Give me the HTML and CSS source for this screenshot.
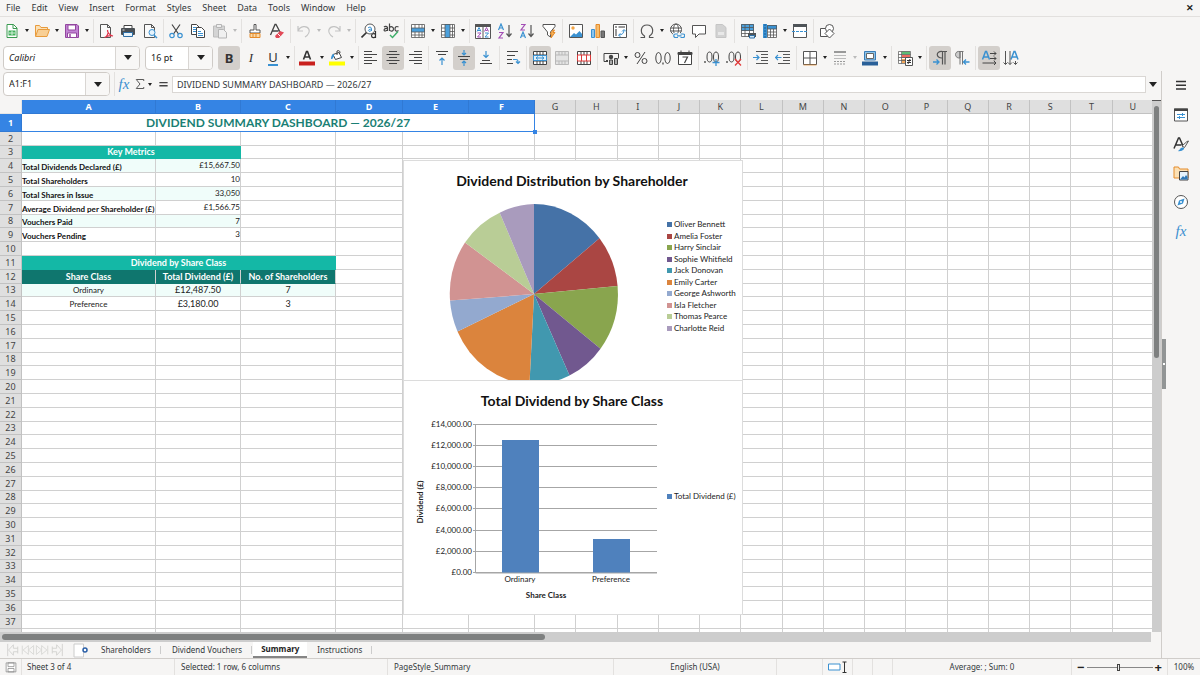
FILE: index.html
```html
<!DOCTYPE html>
<html lang="en">
<head>
<meta charset="utf-8">
<title>Dividend Summary</title>
<link rel="stylesheet" href="styles.css">
</head>
<body>
<svg class="sprite" aria-hidden="true">
  <symbol id="new" viewBox="0 0 16 16"><path d="M3 1.5h6.500l3.500 3.500v9.500H3z" fill="#fff" stroke="#3a9a50"/><path d="M9 1.500V5.500h4" fill="none" stroke="#3a9a50"/><path d="M4.500 7.500h7v5h-7z" fill="#43b05c"/><path d="M5 10h6M8 8v4" stroke="#d6f2dc"/></symbol>
  <symbol id="open" viewBox="0 0 16 16"><path d="M1.500 13V2.500h4l1.500 2h6.500V7" fill="#fbe0b5" stroke="#e89b3c"/><path d="M1.500 13.500 4 6.500h11.500l-2.500 7z" fill="#f8cf95" stroke="#e89b3c"/></symbol>
  <symbol id="save" viewBox="0 0 16 16"><path d="M1.500 1.500h11.500l1.500 1.500v11.500h-13z" fill="#c183d3" stroke="#93469f"/><path d="M4 2h7.500v5H4zM3.500 10h9v4.500h-9z" fill="#fff" stroke="#93469f"/><path d="M6 11v3.500" stroke="#93469f" stroke-width="1.500"/></symbol>
  <symbol id="pdf" viewBox="0 0 16 16"><path d="M2.500 1.500h7l3 3v10h-10z" fill="#fafafa" stroke="#555"/><path d="M9.500 1.500v3h3" fill="none" stroke="#555"/><path d="M9.500 7c1.500 4-1 7-3 7.500M9.500 7c-.5 3 3 5.500 5.500 6-3-.8-6 0-8.500 1.500" fill="none" stroke="#e0354b" stroke-width="1.200"/></symbol>
  <symbol id="print" viewBox="0 0 16 16"><path d="M4 5V2.500h8V5" fill="#fff" stroke="#444"/><rect x="1" y="5" width="14" height="7" rx="1" fill="#4a4f54"/><path d="M3.500 9.500h9v4h-9z" fill="#e8f3fb" stroke="#2e6fa6"/><path d="M2.500 7h2" stroke="#ddd"/></symbol>
  <symbol id="preview" viewBox="0 0 16 16"><path d="M2.500 1.500h7l3 3v10h-10z" fill="#fafafa" stroke="#555"/><path d="M9.500 1.500v3h3" fill="none" stroke="#555"/><circle cx="10" cy="9.500" r="3" fill="#e6f3fc" stroke="#3a91d1"/><path d="m12 12 3 3" stroke="#3a91d1" stroke-width="1.500"/></symbol>
  <symbol id="cut" viewBox="0 0 16 16"><path d="m4 1.500 6.500 9.500M12 1.500 5.500 11" stroke="#444" stroke-width="1.200"/><circle cx="4" cy="12.500" r="2.200" fill="none" stroke="#3a91d1" stroke-width="1.200"/><circle cx="12" cy="12.500" r="2.200" fill="none" stroke="#3a91d1" stroke-width="1.200"/></symbol>
  <symbol id="copy" viewBox="0 0 16 16"><path d="M1.500 1.500h5l2.500 2.500v7.500H1.500z" fill="#fff" stroke="#444"/><path d="M3 4.500h3M3 6.500h3M3 8.500h3" stroke="#3a91d1"/><path d="M6.500 4.500h5l3 3v7h-8z" fill="#fff" stroke="#444"/><path d="M8 8.500h3M8 10.500h5M8 12.500h5" stroke="#3a91d1"/></symbol>
  <symbol id="paste" viewBox="0 0 16 16"><path d="M1.500 3h11v11h-11z" fill="#d4d4d4" stroke="#bcbcbc"/><path d="M4.500 1.500h5v3h-5z" fill="#eee" stroke="#b5b5b5"/><path d="M6.500 6.500h5l3 3v5.500h-8z" fill="#f0f0f0" stroke="#b5b5b5"/></symbol>
  <symbol id="clone" viewBox="0 0 16 16"><path d="M7 1.500h2V7h4v3H3V7h4z" fill="#fff" stroke="#555"/><path d="M3 10.500h10v4H3z" fill="#fad9a8" stroke="#e58b2a"/><path d="M6 11v3M9 11v3" stroke="#e58b2a"/></symbol>
  <symbol id="clear" viewBox="0 0 16 16"><path d="M1.500 12 6 1.500h1L11 9M3.500 8h6" fill="none" stroke="#444" stroke-width="1.300"/><path d="m6 13 5-5 4 1.500-5 5.500H7z" fill="#e24a58"/><path d="m8.500 10.500 3 3" stroke="#fff"/></symbol>
  <symbol id="undo" viewBox="0 0 16 16"><path d="M2 3v5h5M2 8c2-5 9-6 11-1.500 1 3-1 5.500-4 7.500" fill="none" stroke="#c3c3c3" stroke-width="1.200"/></symbol>
  <symbol id="redo" viewBox="0 0 16 16"><path d="M14 3v5H9M14 8C12 3 5 2 3 6.500c-1 3 1 5.500 4 7.500" fill="none" stroke="#c3c3c3" stroke-width="1.200"/></symbol>
  <symbol id="find" viewBox="0 0 16 16"><circle cx="9" cy="6" r="5" fill="#fff" stroke="#555"/><path d="m5.500 9.500-5 5" stroke="#333" stroke-width="1.700"/><path d="M7 5c1-1.500 3.500-1 3.500.5V8M10.500 6C7 6 6.500 8.500 9 8.300l1.500-1" fill="none" stroke="#3a91d1"/><path d="M14.500 8v7M14.500 11.500c-1-1.500-4-1-4 1.200s3 2.500 4 1" fill="none" stroke="#333" stroke-width="1.200"/></symbol>
  <symbol id="spell" viewBox="0 0 16 16"><path d="M1 4c1-1 3.500-.8 3.500.8V8M4.500 5.500C1 5 0 8 2.500 8l2-1M6.500.5V8M6.500 4.500c1.500-1.500 4-.7 4 1.500s-2.500 3-4 1M15.500 4c-2-1.200-3.500 0-3.500 2s1.500 2.800 3.500 1.500" fill="none" stroke="#444" stroke-width="1.200"/><path d="m7 12 2.500 2.500L15 8.500" fill="none" stroke="#3cae68" stroke-width="1.400"/></symbol>
  <symbol id="row" viewBox="0 0 16 16"><path d="M1.500 1.500h13v13h-13z" fill="#fff"/><path d="M1 5h14v4H1z" fill="#4ba0dc"/><path d="M1.500 1.500h13v13h-13zM1.500 5h13M1.500 9h13M1.500 12h13M5 1.500V5M9 1.500V5M12 1.500V5M5 9v5.500M9 9v5.500M12 9v5.500" fill="none" stroke="#555" stroke-width=".8"/></symbol>
  <symbol id="col" viewBox="0 0 16 16"><path d="M1.500 1.500h13v13h-13z" fill="#fff"/><path d="M5 1h5v14H5z" fill="#4ba0dc"/><path d="M1.500 1.500h13v13h-13zM5 1.500v13M10 1.500v13M12.500 1.500v13M1.500 5H5M1.500 8.500H5M1.500 12H5M10 5h4.500M10 8.500h4.500M10 12h4.500" fill="none" stroke="#555" stroke-width=".8"/></symbol>
  <symbol id="sort" viewBox="0 0 16 16"><path d="M.5 1.500h15v14H.5z" fill="#fff" stroke="#555"/><path d="M.5 1.500h15v2H.5zM8 3v12" fill="#555" stroke="#555"/><path d="m2 8.500 2-4 2 4M3 7.500h2M10 10h3.500L10 14h3.500" fill="none" stroke="#3a91d1"/><path d="M2.500 10H6l-3.500 4H6m3.500-5.500 2-4 2 4M10.500 7.500h2" fill="none" stroke="#a34fb5"/></symbol>
  <symbol id="asc" viewBox="0 0 16 16"><path d="m1.500 7 2.500-6 2.500 6M2.500 5h3" fill="none" stroke="#3a91d1" stroke-width="1.200"/><path d="M2 9.500h4L2 15h4" fill="none" stroke="#a34fb5" stroke-width="1.200"/><path d="M12 2v11M9.500 10.500 12 13.500l2.500-3" fill="none" stroke="#555" stroke-width="1.200"/></symbol>
  <symbol id="desc" viewBox="0 0 16 16"><path d="m1.500 15 2.500-6 2.500 6M2.500 13h3" fill="none" stroke="#3a91d1" stroke-width="1.200"/><path d="M2 1.500h4L2 7h4" fill="none" stroke="#a34fb5" stroke-width="1.200"/><path d="M12 2v11M9.500 10.500 12 13.500l2.500-3" fill="none" stroke="#555" stroke-width="1.200"/></symbol>
  <symbol id="filter" viewBox="0 0 16 16"><path d="M2 1.500h12v2L9.500 9v5l-3-2V9L2 3.500z" fill="#fff" stroke="#555"/><path d="m12 7-3 4h2l-1 4 4-5.500h-2L13.500 7z" fill="#f5b55f" stroke="#e58b2a"/></symbol>
  <symbol id="image" viewBox="0 0 16 16"><path d="M1.500 1.500h13v13h-13z" fill="#fff" stroke="#555"/><path d="m2 14 4-4 2 1.500L11.500 8 14 11v3z" fill="#3a91d1"/><circle cx="5" cy="5" r="1.700" fill="#f2a444"/></symbol>
  <symbol id="chart" viewBox="0 0 16 16"><path d="M1.500 6.500h3v8h-3z" fill="#8cc4ec" stroke="#3a91d1"/><path d="M6 1.500h3.500v13H6z" fill="#f7bd6c" stroke="#e58b2a"/><path d="M11 8h3.500v6.500H11z" fill="#777" stroke="#555"/></symbol>
  <symbol id="pivot" viewBox="0 0 16 16"><path d="M1.500 1.500h13v13h-13z" fill="#fff" stroke="#555"/><path d="M3 4h2M6.500 4H13M4 6v7" stroke="#777" stroke-width="1.500"/><path d="M7 12c3 0 5-2 5-5M10 8.500 12 6.500l2 2M8.500 10.500 6.500 12l2 2" fill="none" stroke="#3a91d1"/></symbol>
  <symbol id="omega" viewBox="0 0 16 16"><path d="M1.500 14.500h4V13C.5 10 1.500 2 8 2s7.500 8 2.500 11v1.500h4" fill="none" stroke="#555" stroke-width="1.200"/></symbol>
  <symbol id="link" viewBox="0 0 16 16"><circle cx="7" cy="6.500" r="5.500" fill="#fff" stroke="#555"/><ellipse cx="7" cy="6.500" rx="2.500" ry="5.500" fill="none" stroke="#555"/><path d="M1.500 5h11M1.500 8h11" stroke="#555"/><path d="M4 10h12v6H4z" fill="#f5f5f4"/><path d="M9 14.500H6.500a1.700 1.700 0 0 1 0-3.500H9M11.500 11H14a1.700 1.700 0 0 1 0 3.500h-2.500M8 12.800h4.500" fill="none" stroke="#3a91d1" stroke-width="1.200"/></symbol>
  <symbol id="comment" viewBox="0 0 16 16"><path d="M1.500 2.500h13v8.500H8l-3.500 3.500V11h-3z" fill="#fff" stroke="#555"/></symbol>
  <symbol id="header" viewBox="0 0 16 16"><path d="M3 1.500h6.500l3.500 3v10H3z" fill="#d2d2d2" stroke="#c5c5c5"/><path d="M5 9h6v3H5z" fill="#e8e8e8"/></symbol>
  <symbol id="printarea" viewBox="0 0 16 16"><path d="M1.500 1.500h12v12h-12z" fill="#fff"/><path d="M1 1h13v7H1z" fill="#4ba0dc"/><path d="M1.500 1.500h12v12h-12zM1.500 4.500h12M1.500 7.500h12M1.500 10.500h12M5 1.500v12M9.500 1.500v12" fill="none" stroke="#555" stroke-width=".8"/><path d="M8 10h8v4H8z" fill="#4f5458"/><path d="M9.500 12.500h5V15h-5z" fill="#cfe7f8" stroke="#2e6fa6"/></symbol>
  <symbol id="freeze" viewBox="0 0 16 16"><path d="M1.500 2.500h13v12h-13z" fill="#fff"/><path d="M1 1h4v14H1zM1 2h14v4H1z" fill="#3a91d1"/><path d="M5.500 2.500h9v12h-9zM5.500 6h9M5.500 9h9M5.500 12h9M8.500 6v8.500M11.500 6v8.500" fill="none" stroke="#555" stroke-width=".8"/><path d="M3 1v14" stroke="#195f9c" stroke-dasharray="2 1"/></symbol>
  <symbol id="split" viewBox="0 0 16 16"><path d="M1.500 1.500h13v13h-13z" fill="#fff" stroke="#555"/><path d="M1 1h14v3H1z" fill="#4f5458"/><path d="M0 8.500h16" stroke="#3a91d1" stroke-dasharray="3 1"/></symbol>
  <symbol id="shapes" viewBox="0 0 16 16"><path d="M1.500 5.500h7v8h-7z" fill="#fff" stroke="#555"/><circle cx="10.500" cy="5.500" r="4" fill="#fff" stroke="#555"/><path d="m10.500 6 4.500 4.500-4.500 4.500L6 10.500z" fill="#fff" stroke="#555"/></symbol>
  <symbol id="fontcolor" viewBox="0 0 16 16"><path d="m4.500 9.500 3-8h1l3 8M5.500 7h5" fill="none" stroke="#333" stroke-width="1.600"/><path d="M0 11.500h16v4H0z" fill="#c9211e"/></symbol>
  <symbol id="highlight" viewBox="0 0 16 16"><path d="m4 4.500 6-2 2.500 5-6 2z" fill="#fff" stroke="#444"/><path d="M8 5V1c2-1 3 0 3 2" fill="none" stroke="#444"/><path d="M2 9c0-3 1-5 3-5v3c-1 0-1.500 1-1.500 2z" fill="#3a91d1"/><path d="M0 11.500h16v4H0z" fill="#ff0"/></symbol>
  <symbol id="left" viewBox="0 0 16 16"><path d="M1 1.500h8M1 4.500h13M1 7.500h8M1 10.500h13M1 13.500h8" stroke="#444"/></symbol>
  <symbol id="center" viewBox="0 0 16 16"><path d="M4 1.500h8M1.500 4.500h13M4 7.500h8M1.500 10.500h13M4 13.500h8" stroke="#444"/></symbol>
  <symbol id="right" viewBox="0 0 16 16"><path d="M7 1.500h8M2 4.500h13M7 7.500h8M2 10.500h13M7 13.500h8" stroke="#444"/></symbol>
  <symbol id="top" viewBox="0 0 16 16"><path d="M2 1.500h12M4 4.500h8" stroke="#444"/><path d="M8 15V8M5.500 10.500 8 8l2.500 2.500" fill="none" stroke="#3a91d1" stroke-width="1.200"/></symbol>
  <symbol id="middle" viewBox="0 0 16 16"><path d="M2 6.500h12M4 9.500h8" stroke="#444"/><path d="M8 0v5M6 3l2 2 2-2M8 16v-5M6 13l2-2 2 2" fill="none" stroke="#3a91d1" stroke-width="1.200"/></symbol>
  <symbol id="bottom" viewBox="0 0 16 16"><path d="M2 13.500h12M4 10.500h8" stroke="#444"/><path d="M8 1v6.500M5.500 5 8 7.500 10.500 5" fill="none" stroke="#3a91d1" stroke-width="1.200"/></symbol>
  <symbol id="wrap" viewBox="0 0 16 16"><path d="M2 1.500h11M2 5.500h8M2 9.500h5M2 13.500h6" stroke="#444"/><path d="M8 9.500h3c2 0 2 1 2 4M11 11.500l2 2 2-2" fill="none" stroke="#3a91d1" stroke-width="1.200"/></symbol>
  <symbol id="merge" viewBox="0 0 16 16"><path d="M1.500 1.500h13v13h-13z" fill="#fff"/><path d="M1.500 1.500h13v13h-13zM1.500 5h13M1.500 11h13M5 1.500V5M11 1.500V5M5 11v3.500M8 11v3.500M11 11v3.500M8 1.500V5" fill="none" stroke="#444"/><path d="M1.500 5.500h13v5h-13zM4 8h8M6 6.500 4 8l2 1.500M10 6.500 12 8l-2 1.500" fill="#dff0fb" stroke="#3a91d1"/></symbol>
  <symbol id="mergegrey" viewBox="0 0 16 16"><path d="M1.500 1.500h13v13h-13zM1.500 5h13M1.500 11h13M5 1.500V5M11 1.500V5M5 11v3.500M11 11v3.500M8 1.500V5M8 11v3.500" fill="#e4e4e4" stroke="#b9b9b9"/></symbol>
  <symbol id="unmerge" viewBox="0 0 16 16"><path d="M1.500 1.500h13v13h-13zM5 1.500V5M8 1.500V5M11 1.500V5M5 11v3.500M8 11v3.500M11 11v3.500" fill="#fff" stroke="#444"/><path d="M1.500 5h13v6h-13zM5.500 5v6M10.500 5v6" fill="#fff" stroke="#dc3a3a"/></symbol>
  <symbol id="currency" viewBox="0 0 16 16"><path d="M1 3.500h14.500v5M1 3.500v8h4" fill="none" stroke="#444"/><circle cx="8" cy="7" r="2.200" fill="#444"/><path d="M3 10.500h2M6.500 10v4.500h3V10zM11.500 8.500h3v6h-3z" fill="#aaa" stroke="#444"/></symbol>
  <symbol id="percent" viewBox="0 0 16 16"><circle cx="4.500" cy="5" r="2.500" fill="none" stroke="#444"/><circle cx="11.500" cy="11" r="2.500" fill="none" stroke="#444"/><path d="M12 2 4 14" stroke="#444"/></symbol>
  <symbol id="number" viewBox="0 0 16 16"><ellipse cx="3.500" cy="8" rx="2.700" ry="5.500" fill="none" stroke="#444"/><ellipse cx="12.500" cy="8" rx="2.700" ry="5.500" fill="none" stroke="#444"/><path d="M8 12.500v2" stroke="#444" stroke-width="1.300"/></symbol>
  <symbol id="date" viewBox="0 0 16 16"><path d="M1.500 2.500h13v12h-13z" fill="#fff" stroke="#444"/><path d="M1 2.500h14v2H1zM4 .5v3M12 .5v3" fill="#444" stroke="#444"/><path d="M5.500 7h5L7.500 13" fill="none" stroke="#444" stroke-width="1.200"/></symbol>
  <symbol id="adddec" viewBox="0 0 16 16"><ellipse cx="5.500" cy="7" rx="2.500" ry="5" fill="none" stroke="#444"/><ellipse cx="12" cy="7" rx="2.500" ry="5" fill="none" stroke="#444"/><path d="M1 11v2" stroke="#444" stroke-width="1.300"/><path d="M12 9v7M8.500 12.500h7" stroke="#3a91d1" stroke-width="1.300"/></symbol>
  <symbol id="deldec" viewBox="0 0 16 16"><ellipse cx="5.500" cy="7" rx="2.500" ry="5" fill="none" stroke="#444"/><ellipse cx="12" cy="7" rx="2.500" ry="5" fill="none" stroke="#444"/><path d="M1 11v2" stroke="#444" stroke-width="1.300"/><path d="m9 9 6 6.500M15 9l-6 6.500" stroke="#e23b3b" stroke-width="1.300"/></symbol>
  <symbol id="indent" viewBox="0 0 16 16"><path d="M3 1.500h12M8 4.500h7M8 7.500h7M8 10.500h7M3 13.500h12" stroke="#555"/><path d="M0 7.500h6M3.500 5 6 7.500 3.500 10" fill="none" stroke="#3a91d1" stroke-width="1.200"/></symbol>
  <symbol id="outdent" viewBox="0 0 16 16"><path d="M3 1.500h12M8 4.500h7M8 7.500h7M8 10.500h7M3 13.500h12" stroke="#555"/><path d="M6.500 7.500H0M3 5 .5 7.500 3 10" fill="none" stroke="#3a91d1" stroke-width="1.200"/></symbol>
  <symbol id="borders" viewBox="0 0 16 16"><path d="M1.500 1.500h13v13h-13zM8 1.500v13M1.500 8h13" fill="#fff" stroke="#555"/><path d="M1.500 15h13" stroke="#e58b2a" stroke-width=".7"/></symbol>
  <symbol id="borderstyle" viewBox="0 0 16 16"><path d="M2 2h12" stroke="#999" stroke-width="2"/><path d="M2 5.500h12M2 8.500h12" stroke="#bbb"/><path d="M2 11.500h12M2 14h12" stroke="#999" stroke-dasharray="2 1"/></symbol>
  <symbol id="bordercolor" viewBox="0 0 16 16"><path d="M2.500 1.500h11v8.500h-11z" fill="#8ec5ea" stroke="#3a7db8"/><path d="M4.500 3.500h7v5h-7z" fill="#fff" stroke="#666"/><path d="M0 11.500h16v4H0z" fill="#2a6099"/></symbol>
  <symbol id="cond" viewBox="0 0 16 16"><path d="M1.500 1.500h12v12h-12z" fill="#fff"/><path d="M5 1.500h8v3H5z" fill="#5dbb74"/><path d="M5 5h8v3H5z" fill="#ee6a5f"/><path d="M5 9h5v4H5z" fill="#f3a75a"/><path d="M1.500 1.500h12v12h-12zM1.500 4.500h12M1.500 7.500h12M1.500 10.500h12M4.500 1.500v12" fill="none" stroke="#555" stroke-width=".7"/><path d="M8.500 7.500h7v8h-7z" fill="#fff" stroke="#555"/><path d="M10 10.500h4M10 12.500h4M13 9l-2 5" stroke="#333"/></symbol>
  <symbol id="ltr" viewBox="0 0 16 16"><path d="M8.500 1.500H15M10.500 1.500v13M13 1.500v13M10.500 1.500c-7-1-7 7 0 6.500" fill="none" stroke="#555" stroke-width="1.200"/><path d="M1 12h6M4.500 9.500 7 12l-2.500 2.500" fill="none" stroke="#3a91d1" stroke-width="1.300"/></symbol>
  <symbol id="rtl" viewBox="0 0 16 16"><path d="M5 1.500h4.500M6 1.500v13M8.500 1.500v13M6 1.500C0 .5 0 8.500 6 8z" fill="#ccc" stroke="#777"/><path d="M15.500 12H10M12 9.500 9.500 12l2.500 2.500" fill="none" stroke="#3a91d1" stroke-width="1.300"/></symbol>
  <symbol id="texth" viewBox="0 0 16 16"><path d="M1.500 9.500 4.500 1.500h1l3 8M2.500 7h5" fill="none" stroke="#3a91d1" stroke-width="1.500"/><path d="M9 3.500h6M9 8.500h6M1.500 13h13.500M13 1.500l2 2-2 2M13 6.500l2 2-2 2M13 11l2 2-2 2" fill="none" stroke="#444"/></symbol>
  <symbol id="textv" viewBox="0 0 16 16"><path d="m8 9.500 3-8h1l3 8M9 7h5" fill="none" stroke="#3a91d1" stroke-width="1.500"/><path d="M2.500 1v13.500M7 1v13.500M12.500 11v3.500M.5 12.500l2 2 2-2M5 12.500l2 2 2-2M10.500 12.500l2 2 2-2" fill="none" stroke="#555"/></symbol>
  <symbol id="burger" viewBox="0 0 16 16"><path d="M3 4.500h10M3 8.200h10M3 12h10" stroke="#333" stroke-width="1.400"/></symbol>
  <symbol id="props" viewBox="0 0 16 16"><path d="M1.500 2h13v12h-13z" fill="#fff" stroke="#555"/><path d="M1 1.500h14v2.500H1z" fill="#444"/><path d="M4 7.500h8M4 10.500h8" stroke="#3a91d1"/><path d="M9.500 6v3M6.500 9v3" stroke="#3a91d1"/></symbol>
  <symbol id="styles" viewBox="0 0 16 16"><path d="M1 12.500 5.500 2h1l4 9M2.500 9h6" fill="none" stroke="#333" stroke-width="1.500"/><path d="m15.500 5-4 6.500L9 10l5-4.500z" fill="#fff" stroke="#555"/><path d="M4 15c3 0 3-4 6-3.500S10 16 4 15z" fill="#3a91d1"/></symbol>
  <symbol id="gallery" viewBox="0 0 16 16"><path d="M1 13V2h4.500l1 2H15v9z" fill="#fbe0b5" stroke="#e58b2a"/><path d="M6.500 6.500h8.500v8.500H6.500z" fill="#e6f3fc" stroke="#444"/><path d="m7 14.500 3-3.500 1.500 1.500L13 10l1.500 2v2.500z" fill="#2f78b7"/></symbol>
  <symbol id="compass" viewBox="0 0 16 16"><circle cx="8" cy="8" r="6.500" fill="#fff" stroke="#555"/><path d="M11.500 4.500 10 9.500l-5.500 2L6 6.500z" fill="#3a91d1"/><circle cx="8" cy="8" r="1" fill="#fff"/></symbol>
  <symbol id="sigma" viewBox="0 0 16 16"><path d="M13 4V2H3l5 6-5 6h10v-2" fill="none" stroke="#555" stroke-width="1.300"/></symbol>
  <symbol id="equals" viewBox="0 0 16 16"><path d="M2 6h12M2 10.500h12" stroke="#444" stroke-width="2"/></symbol>
  <symbol id="disk" viewBox="0 0 16 16"><path d="M1.500 2.500h13v12h-13zM4 2.500h8v5H4zM4 10h8v4.500H4z" fill="#fff" stroke="#888"/></symbol>
  <symbol id="first" viewBox="0 0 16 16"><path d="M2.500 1v14M14 4v8M14 6H9V2L3.500 8 9 14v-4h5" fill="none" stroke="#d0d0ce"/></symbol>
  <symbol id="prev" viewBox="0 0 16 16"><path d="M2 3v10M9 3 3 8l6 5zM15 3 9 8l6 5z" fill="none" stroke="#d6d6d4"/></symbol>
  <symbol id="next" viewBox="0 0 16 16"><path d="M14 3v10M7 3l6 5-6 5zM1 3l6 5-6 5z" fill="none" stroke="#d6d6d4"/></symbol>
  <symbol id="last" viewBox="0 0 16 16"><path d="M13.500 1v14M2 4v8M2 6h5V2l5.500 6L7 14v-4H2" fill="none" stroke="#d0d0ce"/></symbol>
  <symbol id="addsheet" viewBox="0 0 16 16"><path d="M1 2h9.500v13H1z" fill="#fff" stroke="#ccc"/><circle cx="12" cy="8" r="2" fill="#fff" stroke="#2a5fa8" stroke-width="1.500"/></symbol>
</svg>

<nav class="menubar">
  <button>File</button><button>Edit</button><button>View</button><button>Insert</button><button>Format</button><button>Styles</button><button>Sheet</button><button>Data</button><button>Tools</button><button>Window</button><button>Help</button>
  <button class="close" aria-label="Close document">✕</button>
</nav>

<div class="toolbar" id="standard"></div>

<div class="toolbar formatting" id="formatting">
  <label class="combo font"><input type="text" value="Calibri" aria-label="Font name"><button class="drop" aria-label="Font list"></button></label>
  <label class="combo size"><input type="text" value="16 pt" aria-label="Font size"><button class="drop" aria-label="Size list"></button></label>
</div>

<div class="work">
  <main class="main">
    <div class="formulabar">
      <label class="combo name"><input type="text" value="A1:F1" aria-label="Name box"><button class="drop" aria-label="Ranges"></button></label>
      <div class="tools">
        <button class="tool fx" aria-label="Function wizard"><i>fx</i></button>
        <button class="tool small" aria-label="Select function"><svg><use href="#sigma"/></svg></button>
        <button class="arrow" aria-label="Function list"></button>
        <button class="tool equals" aria-label="Formula"><svg><use href="#equals"/></svg></button>
      </div>
      <input class="formula" type="text" value="DIVIDEND SUMMARY DASHBOARD — 2026/27" aria-label="Input line">
      <button class="expand drop" aria-label="Expand formula bar"></button>
    </div>
    <div class="sheetrow">
      <div class="sheet">
        <table id="grid"></table>
        <span class="handle"></span>
        <svg class="chart pie" viewBox="0 0 340 221" role="img" aria-label="Dividend Distribution by Shareholder">
          <text class="title" x="169" y="26">Dividend Distribution by Shareholder</text>
          <g id="slices"></g>
          <g id="legend"></g>
        </svg>
        <svg class="chart bars" viewBox="0 0 340 235" role="img" aria-label="Total Dividend by Share Class">
          <text class="title" x="169" y="26">Total Dividend by Share Class</text>
          <g id="axis"></g>
          <path d="M99 60h37v133H99zM190 159h37v34h-37z" fill="#4f81bd"/>
          <path d="M72.500 44v149H254" fill="none" stroke="#a6a6a6"/>
          <text class="mid" x="117" y="202">Ordinary</text>
          <text class="mid" x="208" y="202">Preference</text>
          <text class="mid strong" x="143" y="218">Share Class</text>
          <text class="mid strong" transform="translate(20 122) rotate(-90)">Dividend (£)</text>
          <path d="M264 114h5v5h-5z" fill="#4f81bd"/>
          <text x="271" y="119">Total Dividend (£)</text>
        </svg>
      </div>
      <div class="vscroll"><span></span></div>
    </div>
    <div class="hscroll"><span></span></div>
    <div class="tabs">
      <div class="tabnav">
        <button aria-label="First sheet"><svg><use href="#first"/></svg></button><button aria-label="Previous sheet"><svg><use href="#prev"/></svg></button><button aria-label="Next sheet"><svg><use href="#next"/></svg></button><button aria-label="Last sheet"><svg><use href="#last"/></svg></button>
      </div>
      <button class="add" aria-label="Add sheet"><svg><use href="#addsheet"/></svg></button>
      <button class="tab">Shareholders</button><button class="tab">Dividend Vouchers</button><button class="tab active">Summary</button><button class="tab">Instructions</button>
    </div>
  </main>
  <aside class="sidebar">
    <button class="grip" aria-label="Hide sidebar"></button>
    <button class="tool settings" aria-label="Sidebar settings"><svg><use href="#burger"/></svg></button>
    <button class="tool" aria-label="Properties"><svg><use href="#props"/></svg></button>
    <button class="tool" aria-label="Styles"><svg><use href="#styles"/></svg></button>
    <button class="tool" aria-label="Gallery"><svg><use href="#gallery"/></svg></button>
    <button class="tool" aria-label="Navigator"><svg><use href="#compass"/></svg></button>
    <button class="tool fx" aria-label="Functions"><i>fx</i></button>
  </aside>
</div>

<footer class="status">
  <span class="s-save"><svg><use href="#disk"/></svg></span>
  <span class="s-sheet">Sheet 3 of 4</span>
  <span class="s-sel">Selected: 1 row, 6 columns</span>
  <span class="s-style">PageStyle_Summary</span>
  <span class="s-lang">English (USA)</span>
  <span class="s-gap"></span>
  <span class="s-mode"><svg viewBox="0 0 20 12"><path d="M.5 3h11.500v6H.5z" fill="#fff" stroke="#3a91d1"/><path d="M14.500 1h4M14.500 11.500h4M16.500 1v10.500" stroke="#333"/></svg></span>
  <span class="s-cell"></span><span class="s-cell"></span>
  <span class="s-sum">Average: ; Sum: 0</span>
  <span class="s-zoom"><button aria-label="Zoom out">−</button><input type="range" min="0" max="100" value="49" aria-label="Zoom"><button aria-label="Zoom in">+</button></span>
  <span class="s-pct">100%</span>
</footer>
<script src="script.js"></script>
</body>
</html>
```
FILE: styles.css
```css
* { box-sizing: border-box; }
body {
  margin: 0;
  height: 100vh;
  display: flex;
  flex-direction: column;
  overflow: hidden;
  background: #f6f5f4;
  color: #33383b;
  font: 9px/12px "Noto Sans", sans-serif;
}
button, input {
  margin: 0;
  padding: 0;
  border: 0;
  background: none;
  color: inherit;
  font: inherit;
  min-width: 0;
}
.sprite { display: none; }

.menubar {
  display: flex;
  align-items: center;
  height: 17px;
  padding: 0 6px 0 0;
  border-bottom: 1px solid #e2e0de;
}
.menubar button { padding: 0 5px 0 6px; }
.menubar .close { margin-left: auto; padding: 0; font-weight: 700; color: #222; }

.toolbar { display: flex; align-items: center; height: 27px; }
.toolbar.formatting { padding-left: 3px; }
.group {
  display: flex;
  align-items: center;
  height: 24px;
  padding: 0 2px 0 1px;
  border-right: 1px solid #e3e1df;
}
.group:nth-of-type(n+4) { padding-left: 2px; }
.group:last-of-type { border-right: 0; }
.tool {
  width: 22px;
  height: 24px;
  display: flex;
  align-items: center;
  justify-content: center;
  border-radius: 3px;
}
.tool svg { width: 16px; height: 16px; }
.tool.on { background: #d3cfcb; }
.tool.glyph { font-size: 13px; line-height: 16px; color: #333; }
.tool.bold { font-weight: 700; }
.tool.italic { font-family: "Liberation Serif", serif; font-style: italic; }
.tool.under span { border-bottom: 2px solid #3a91d1; line-height: 14px; }
.arrow { width: 8px; height: 24px; display: flex; align-items: center; justify-content: center; }
.arrow::before, .drop::before {
  content: "";
  border: 2px solid transparent;
  border-top: 3px solid #222;
  border-bottom: 0;
}
.arrow.off::before { border-top-color: #bbb; }
.drop::before { border-width: 5px 4px 0; }
.drop { display: flex; align-items: center; justify-content: center; }

.combo {
  display: flex;
  height: 24px;
  border: 1px solid #cfcbc7;
  border-radius: 4px;
  background: #fff;
  overflow: hidden;
}
.combo input { flex: 1; padding-left: 5px; color: #222; }
.combo .drop { width: 24px; border-left: 1px solid #d9d6d3; background: #f8f7f6; }
.combo.font { width: 137px; margin-right: 5px; }
.combo.font input { font-style: italic; }
.combo.size { width: 68px; margin-right: 4px; }

.work { flex: 1; display: flex; min-height: 0; }
.main { flex: 1; min-width: 0; display: flex; flex-direction: column; }
.formulabar { display: flex; align-items: center; height: 29px; padding: 0 2px 3px 3px; }
.combo.name { width: 107px; }
.tools { display: flex; align-items: center; margin-left: 4px; border-left: 1px solid #e3e1df; }
.tool.small { width: 13px; }
.tool.small svg { width: 12px; }
.tool.equals { width: 18px; }
.tool.equals svg { width: 11px; }
.fx { width: 18px; font: 15px/18px "Liberation Serif", serif; color: #3a8fd0; }
.formula { flex: 1; height: 17px; padding-left: 4px; border: 1px solid #dad7d4; background: #fff; }
.expand { width: 13px; height: 17px; }

.sheetrow { flex: 1; min-height: 0; display: flex; }
.sheet { position: relative; flex: 1; min-width: 0; overflow: hidden; background: #fff; }
table { width: calc(100% + 2px); table-layout: fixed; border-collapse: separate; border-spacing: 0; }
th, td {
  height: 14px;
  padding: 0;
  border-right: 1px solid #d0d0d0;
  border-bottom: 1px solid #d0d0d0;
  line-height: 12px;
  white-space: nowrap;
  overflow: hidden;
}
tr:nth-child(5n+3) > * { height: 13px; }
tr.tall > * { height: 18px; }
th { background: #dfdfdf; border-color: #c2c2c2; font-weight: 400; color: #444; }
th.sel { background: #3584e4; border-color: #3079d4; color: #fff; font-weight: 700; }
thead th:first-child { background: #f6f5f4; border-color: #e6e6e6; }
.c-row { width: 22px; }
.c-a { width: 134px; }
.c-b { width: 85px; }
.c-c { width: 95px; }
.c-d { width: 67px; }
.c-e { width: 66px; }
td { font-family: Lato, sans-serif; color: #222; }
td.heading { border: solid #3584e4; border-width: 0 1px 1px 0; text-align: center; font-size: 12px; line-height: 16px; font-weight: 700; color: #1a7f74; }
td.band { background: #14b8a6; border-color: #14b8a6; color: #fff; text-align: center; font-weight: 700; }
td.head { background: #0f766e; border-bottom-color: #0f766e; color: #fff; text-align: center; font-weight: 700; }
td.label { font-size: 8px; line-height: 10px; font-weight: 700; vertical-align: bottom; color: #111; }
td.value { font-size: 8px; text-align: right; vertical-align: top; }
td.item { font-size: 8px; text-align: center; }
td.num { text-align: center; }
td.tint { background: #f0fdfa; }
.handle { position: absolute; left: 533px; top: 30px; width: 4px; height: 4px; background: #3584e4; }

.chart { position: absolute; left: 403px; width: 340px; background: #fff; outline: 1px solid #dcdcdc; outline-offset: -1px; font: 8px Lato, sans-serif; fill: #222; }
.pie { top: 60px; height: 221px; }
.bars { top: 280px; height: 235px; }
.chart .title { font-size: 14px; font-weight: 700; text-anchor: middle; fill: #111; }
.chart .mid { text-anchor: middle; }
.chart .end { text-anchor: end; }
.chart .strong { font-weight: 700; }

.vscroll { width: 9px; padding: 5px 2px 0; background: #cdcdcd; border-top: 1px solid #555; }
.vscroll span { display: block; height: 48%; border-radius: 3px; background: #7e8080; }
.hscroll { height: 10px; margin-right: 10px; padding: 2px; background: #cdcdcd; }
.hscroll span { display: block; width: 47.3%; height: 6px; border-radius: 3px; background: #7e8080; }

.tabs { display: flex; height: 16px; font-size: 8px; }
.tabnav { display: flex; padding-left: 5px; }
.tabnav svg { width: 15px; height: 14px; }
.tabnav button, .add { display: flex; align-items: center; }
.add { width: 26px; padding-left: 8px; }
.add svg { width: 16px; height: 16px; }
.tab { padding: 0 10px; position: relative; }
.tab:not(.active) { border-right: 1px solid transparent; }
.tab:not(.active)::after { content: ""; position: absolute; right: 0; top: 4px; height: 8px; border-right: 1px solid #ccc; }
.tab.active { padding: 0 8px; background: #fff; border-bottom: 2px solid #858585; font-weight: 700; line-height: 12px; color: #222; }

.sidebar { position: relative; width: 39px; display: flex; flex-direction: column; align-items: center; gap: 5px; border-left: 1px solid #d0cdca; padding-top: 1px; }
.settings { height: 26px; }
.grip { position: absolute; left: 0; top: 268px; width: 4px; height: 50px; background: #929595; }
.grip::before { content: ""; display: block; margin: 0 1px; width: 2px; height: 2px; background: #fff; }

.status { display: flex; height: 17px; border-top: 1px solid #d0cdca; font-size: 8px; }
.status > span { display: flex; align-items: center; justify-content: center; border-right: 1px solid #e3e1df; }
.status .s-save { width: 22px; }
.s-save svg { width: 12px; height: 12px; }
.status .s-sheet, .status .s-sel, .status .s-style { justify-content: flex-start; padding-left: 5px; }
.status .s-sheet { width: 153px; }
.status .s-sel { width: 213px; padding-left: 6px; }
.status .s-style { width: 226px; padding-left: 6px; }
.s-lang { flex: 1; }
.s-gap { width: 46px; }
.s-mode { width: 30px; }
.s-mode svg { width: 20px; height: 12px; }
.s-cell { width: 20px; }
.s-sum { width: 179px; }
.s-zoom { width: 96px; gap: 2px; }
.s-zoom button { font-size: 13px; line-height: 14px; font-weight: 700; color: #222; }
.s-zoom input { width: 66px; height: 12px; appearance: none; }
.s-zoom input::-webkit-slider-runnable-track { height: 1px; background: #888; }
.s-zoom input::-webkit-slider-thumb { appearance: none; width: 3px; height: 7px; margin-top: -3px; background: #eee; border: 1px solid #444; }
.status .s-pct { width: 32px; border: 0; }
```
FILE: script.js
```js
// Each group lists its tools; a trailing "+" adds a drop-down arrow,
// "*" marks a pressed tool and "-" a disabled drop-down.
const standard = ["new+ open+ save+", "pdf print preview", "cut copy paste-", "clone clear", "undo- redo-",
  "find spell", "row+ col+", "sort asc desc filter", "image chart pivot", "omega+ link comment header",
  "printarea freeze+ split", "shapes"];
const formatting = ["B* I U+", "fontcolor+ highlight+", "left center* right", "top middle* bottom", "wrap",
  "merge* mergegrey unmerge", "currency+ percent number date", "adddec deldec", "indent outdent",
  "borders+ borderstyle- bordercolor+", "cond+", "ltr* rtl", "texth* textv"];
const glyphs = { B: "bold", I: "italic", U: "under" };

function fill(id, groups) {
  const bar = document.getElementById(id);
  for (const g of groups) {
    const box = document.createElement("div");
    box.className = "group";
    box.innerHTML = g.split(" ").map(t => {
      const name = t.replace(/[+*-]$/, ""), flag = t.slice(name.length), on = flag === "*" ? " on" : "";
      const tool = glyphs[name]
        ? `<button class="tool glyph ${glyphs[name]}${on}" aria-label="${glyphs[name]}"><span>${name}</span></button>`
        : `<button class="tool${on}" aria-label="${name}"><svg><use href="#${name}"/></svg></button>`;
      const arrow = flag === "+" || flag === "-" ? `<button class="arrow${flag === "-" ? " off" : ""}" aria-label="${name} options"></button>` : "";
      return tool + arrow;
    }).join("");
    bar.append(box);
  }
}
fill("standard", standard);
fill("formatting", formatting);

const letters = [..."ABCDEFGHIJKLMNOPQRSTU"];
const lastRow = 37;
// cell: [text, class, column span]
const cells = {
  A1: ["DIVIDEND SUMMARY DASHBOARD — 2026/27", "heading", 6],
  A3: ["Key Metrics", "band", 2],
  A4: ["Total Dividends Declared (£)", "label tint"], B4: ["£15,667.50", "value tint"],
  A5: ["Total Shareholders", "label"], B5: ["10", "value"],
  A6: ["Total Shares in Issue", "label tint"], B6: ["33,050", "value tint"],
  A7: ["Average Dividend per Shareholder (£)", "label"], B7: ["£1,566.75", "value"],
  A8: ["Vouchers Paid", "label tint"], B8: ["7", "value tint"],
  A9: ["Vouchers Pending", "label"], B9: ["3", "value"],
  A11: ["Dividend by Share Class", "band", 3],
  A12: ["Share Class", "head"], B12: ["Total Dividend (£)", "head"], C12: ["No. of Shareholders", "head"],
  A13: ["Ordinary", "item tint"], B13: ["£12,487.50", "num tint"], C13: ["7", "num tint"],
  A14: ["Preference", "item"], B14: ["£3,180.00", "num"], C14: ["3", "num"]
};
let html = "<colgroup>" + ["row", "a", "b", "c", "d", "e", "e"].map(c => `<col class="c-${c}">`).join("") + "<col>".repeat(15) + "</colgroup>";
html += "<thead><tr><th></th>" + letters.map((l, i) => `<th${i < 6 ? ' class="sel"' : ""}>${l}</th>`).join("") + "</tr></thead><tbody>";
for (let r = 1; r <= lastRow + 1; r++) {
  html += `<tr${r === 1 ? ' class="tall"' : ""}><th${r === 1 ? ' class="sel"' : ""}>${r <= lastRow ? r : ""}</th>`;
  for (let c = 0; c < letters.length; c++) {
    const [text, cls, span] = cells[letters[c] + r] || [""];
    html += `<td${cls ? ` class="${cls}"` : ""}${span ? ` colspan="${span}"` : ""}>${text}</td>`;
    if (span) c += span - 1;
  }
  html += "</tr>";
}
document.getElementById("grid").innerHTML = html + "</tbody>";

// name, colour, end point of the slice on the ellipse
const holders = [
  ["Oliver Bennett", "#4572a7", "196.5 78.3"], ["Amelia Foster", "#aa4643", "214.6 126"],
  ["Harry Sinclair", "#89a54e", "197.5 188.7"], ["Sophie Whitfield", "#71588f", "166.5 215.5"],
  ["Jack Donovan", "#4198af", "126.5 224"], ["Emily Carter", "#db843d", "54.5 171.5"],
  ["George Ashworth", "#93a9cf", "47 140.6"], ["Isla Fletcher", "#d19392", "62 82.5"],
  ["Thomas Pearce", "#b9cd96", "96.7 52.7"], ["Charlotte Reid", "#a99bbd", "131 44"]
];
let from = "131 44";
let slices = "", legend = "";
holders.forEach(([name, color, to], i) => {
  slices += `<path d="M131 134L${from}A84 90 0 0 1 ${to}z" fill="${color}"/>`;
  const y = 64 + Math.round(i * 11.5);
  legend += `<rect x="264" y="${y - 2}" width="5" height="5" fill="${color}"/><text x="271" y="${y + 3}">${name}</text>`;
  from = to;
});
document.getElementById("slices").innerHTML = slices;
document.getElementById("legend").innerHTML = legend;

let axis = "";
for (let i = 0; i <= 7; i++) {
  const y = Math.round(193 - i * 21.2);
  axis += `<path d="M70 ${y - 0.5}H254" stroke="#a6a6a6"/><text class="end" x="69" y="${y + 2}">£${(i * 2000).toLocaleString("en-GB")}.00</text>`;
}
document.getElementById("axis").innerHTML = axis;
```
